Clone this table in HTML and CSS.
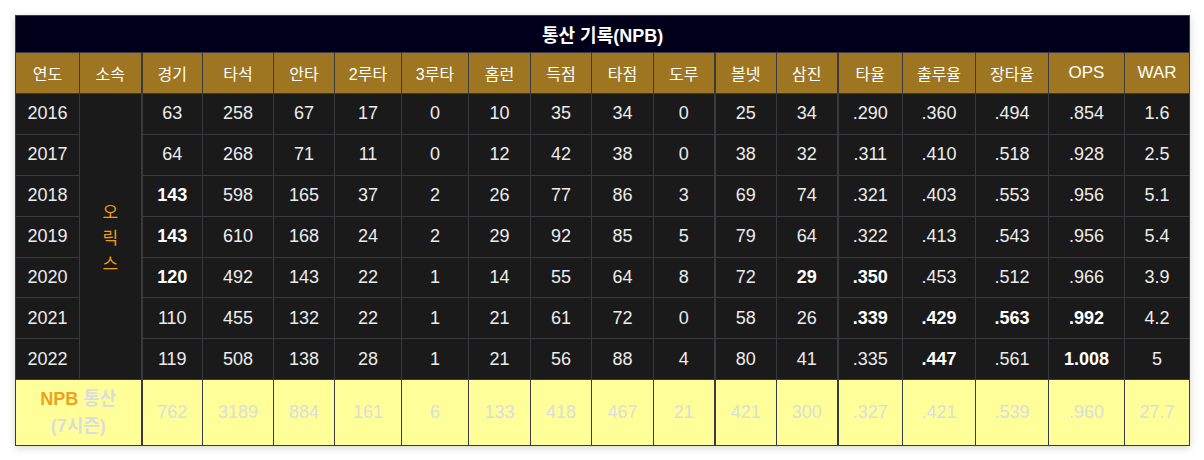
FILE: index.html
```html
<!DOCTYPE html>
<html lang="ko">
<head>
<meta charset="utf-8">
<title>통산 기록(NPB)</title>
<link rel="stylesheet" href="styles.css">
</head>
<body>
<div class="wrap">
<table class="stats">
  <colgroup>
    <col class="c-year"><col class="c-team"><col class="c-g"><col class="c-pa"><col class="c-h"><col class="c-2b"><col class="c-3b"><col class="c-hr"><col class="c-r"><col class="c-rbi"><col class="c-sb"><col class="c-bb"><col class="c-so"><col class="c-avg"><col class="c-obp"><col class="c-slg"><col class="c-ops"><col class="c-war">
  </colgroup>
  <thead>
    <tr><th class="title" colspan="18">통산 기록(NPB)</th></tr>
    <tr class="head">
      <th>연도</th><th class="sep">소속</th><th>경기</th><th>타석</th><th>안타</th><th>2루타</th><th>3루타</th><th>홈런</th><th>득점</th><th>타점</th><th class="sep">도루</th><th>볼넷</th><th class="sep">삼진</th><th>타율</th><th>출루율</th><th>장타율</th><th>OPS</th><th>WAR</th>
    </tr>
  </thead>
  <tbody>
    <tr>
      <td>2016</td><td class="team sep" rowspan="7">오<br>릭<br>스</td><td>63</td><td>258</td><td>67</td><td>17</td><td>0</td><td>10</td><td>35</td><td>34</td><td class="sep">0</td><td>25</td><td class="sep">34</td><td>.290</td><td>.360</td><td>.494</td><td>.854</td><td>1.6</td>
    </tr>
    <tr>
      <td>2017</td><td>64</td><td>268</td><td>71</td><td>11</td><td>0</td><td>12</td><td>42</td><td>38</td><td class="sep">0</td><td>38</td><td class="sep">32</td><td>.311</td><td>.410</td><td>.518</td><td>.928</td><td>2.5</td>
    </tr>
    <tr>
      <td>2018</td><td class="b">143</td><td>598</td><td>165</td><td>37</td><td>2</td><td>26</td><td>77</td><td>86</td><td class="sep">3</td><td>69</td><td class="sep">74</td><td>.321</td><td>.403</td><td>.553</td><td>.956</td><td>5.1</td>
    </tr>
    <tr>
      <td>2019</td><td class="b">143</td><td>610</td><td>168</td><td>24</td><td>2</td><td>29</td><td>92</td><td>85</td><td class="sep">5</td><td>79</td><td class="sep">64</td><td>.322</td><td>.413</td><td>.543</td><td>.956</td><td>5.4</td>
    </tr>
    <tr>
      <td>2020</td><td class="b">120</td><td>492</td><td>143</td><td>22</td><td>1</td><td>14</td><td>55</td><td>64</td><td class="sep">8</td><td>72</td><td class="sep b">29</td><td class="b">.350</td><td>.453</td><td>.512</td><td>.966</td><td>3.9</td>
    </tr>
    <tr>
      <td>2021</td><td>110</td><td>455</td><td>132</td><td>22</td><td>1</td><td>21</td><td>61</td><td>72</td><td class="sep">0</td><td>58</td><td class="sep">26</td><td class="b">.339</td><td class="b">.429</td><td class="b">.563</td><td class="b">.992</td><td>4.2</td>
    </tr>
    <tr>
      <td>2022</td><td>119</td><td>508</td><td>138</td><td>28</td><td>1</td><td>21</td><td>56</td><td>88</td><td class="sep">4</td><td>80</td><td class="sep">41</td><td>.335</td><td class="b">.447</td><td>.561</td><td class="b">1.008</td><td>5</td>
    </tr>
  </tbody>
  <tfoot>
    <tr>
      <td class="total-label sep" colspan="2"><span class="npb">NPB</span> 통산<br>(7시즌)</td><td>762</td><td>3189</td><td>884</td><td>161</td><td>6</td><td>133</td><td>418</td><td>467</td><td class="sep">21</td><td>421</td><td class="sep">300</td><td>.327</td><td>.421</td><td>.539</td><td>.960</td><td>27.7</td>
    </tr>
  </tfoot>
</table>
</div>
</body>
</html>
```

FILE: styles.css
```css
html, body {
  margin: 0;
  padding: 0;
  background: #ffffff;
}

.wrap {
  padding: 15px;
}

.stats {
  width: 1174px;
  table-layout: fixed;
  border-collapse: collapse;
  font-family: "Liberation Sans", Arial, "Noto Sans CJK KR", sans-serif;
  font-size: 18px;
  color: #ececec;
  text-align: center;
  box-shadow: 0 2px 8px rgba(0, 0, 0, 0.16);
}

.c-year { width: 64px; }
.c-team { width: 62px; }
.c-g { width: 61px; }
.c-pa { width: 71px; }
.c-h { width: 61px; }
.c-2b { width: 67px; }
.c-3b { width: 67px; }
.c-hr { width: 62px; }
.c-r { width: 61px; }
.c-rbi { width: 62px; }
.c-sb { width: 61px; }
.c-bb { width: 62px; }
.c-so { width: 61px; }
.c-avg { width: 65px; }
.c-obp { width: 73px; }
.c-slg { width: 73px; }
.c-ops { width: 76px; }
.c-war { width: 65px; }

.stats th,
.stats td {
  border: 1px solid #3a3a3e;
  padding: 0;
}

.stats .title {
  background: #00001a;
  color: #ffffff;
  font-weight: bold;
  font-size: 18px;
  height: 36px;
  border-color: #3a3a4a;
}

.head th {
  background: #9e7622;
  color: #ffffff;
  font-weight: normal;
  height: 40px;
  font-size: 16px;
  font-family: "Noto Sans CJK KR", "Liberation Sans", sans-serif;
}

.head th:nth-child(n+17) {
  font-family: "Liberation Sans", Arial, sans-serif;
  font-size: 17px;
}

.head th:nth-child(6),
.head th:nth-child(7) {
  font-family: "Liberation Sans", "Noto Sans CJK KR", sans-serif;
}

tbody td {
  background: #1a1a1a;
  height: 39.9px;
}

.stats .sep {
  border-right: 2px solid #3a3a3e;
}

.stats .b {
  font-weight: bold;
  color: #ffffff;
}

.team {
  color: #f39c12;
  line-height: 26px;
  font-family: "Noto Sans CJK KR", sans-serif;
  font-size: 17px;
}

tfoot td {
  background: #ffff99;
  color: #dcdcdc;
  height: 65px;
  border-color: #333333;
  border-top: 2px solid #2a2a2a;
}

tfoot .total-label {
  font-weight: bold;
  line-height: 27px;
}

tfoot .npb {
  color: #f0a020;
}
```
